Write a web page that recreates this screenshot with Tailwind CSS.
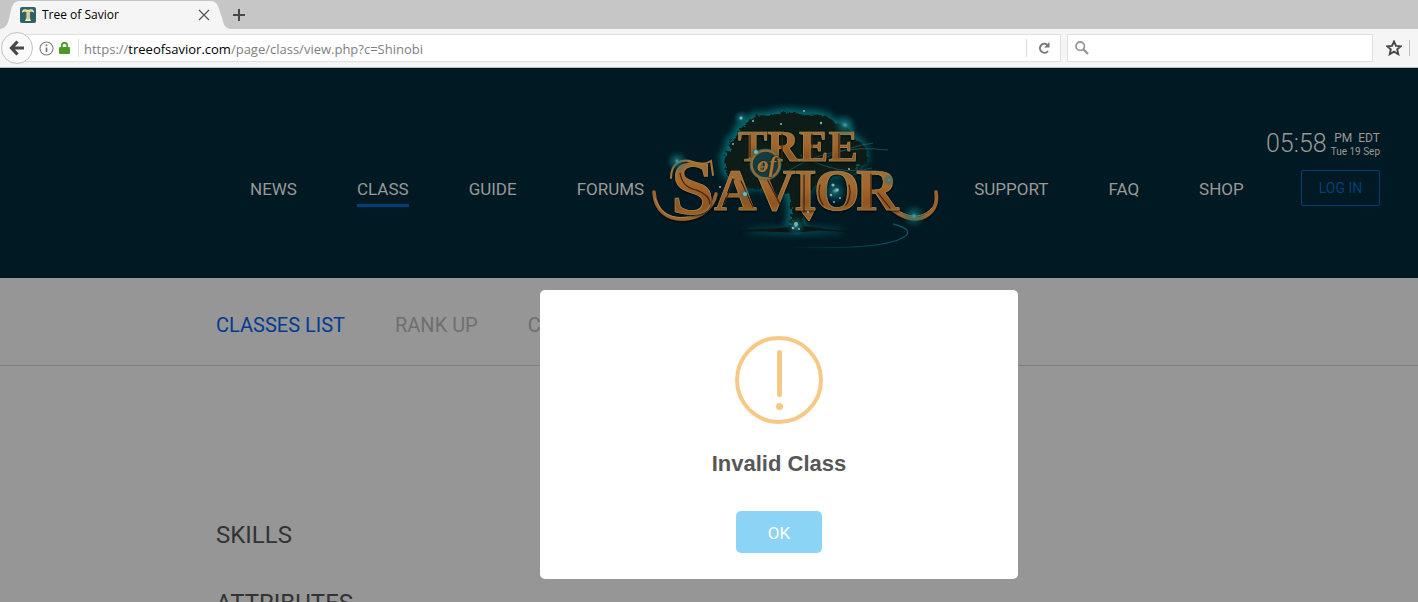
<!DOCTYPE html>
<html lang="en">
<head>
<meta charset="utf-8">
<meta name="viewport" content="width=device-width, initial-scale=1">
<title>Tree of Savior</title>
<script src="https://cdn.jsdelivr.net/npm/@tailwindcss/browser@4"></script>
</head>
<body class="flex h-screen flex-col overflow-hidden bg-[#969696] font-['Roboto',sans-serif]">

<!-- Browser chrome -->
<div class="shrink-0 border-b border-[#b9bdbb] bg-[#f5f5f5] font-['Open_Sans','Noto_Sans',sans-serif]">
  <div class="flex h-[29px] items-stretch bg-[#c6c6c6]">
    <div class="relative flex w-[231px] items-center pr-[19px] pl-5">
      <svg class="absolute inset-0 h-full w-full" viewBox="0 0 232 29" preserveAspectRatio="none" aria-hidden="true"><path d="M0 29C7 28 8 23 10 15C12 6 13 1 20 1H211C219 1 219 7 222 15C225 23 224 28 232 29Z" fill="#f5f5f5"/></svg>
      <svg class="relative h-4 w-4" viewBox="0 0 16 16" aria-hidden="true"><rect width="16" height="16" rx="2" fill="#2f6267"/><path d="M2 5.500C2 2 5 1.800 8 3C11 1.800 14 2 14 5.500C12.500 4.500 11 4.500 9.700 5V11L11 14H5L6.500 11V5C5 4.500 3.500 4.500 2 5.500Z" fill="#fbf3c4"/><path d="M8 4V13M3.500 4H6.500M9.500 4H12.500" stroke="#c6a646" fill="none"/></svg>
      <span class="relative ml-1.5 text-xs leading-4 text-black">Tree of Savior</span>
      <button class="relative ml-auto flex h-4 w-4 items-center justify-center" aria-label="Close tab"><svg class="h-3 w-3" viewBox="0 0 12 12"><path d="M1 1L11 11M11 1L1 11" stroke="#555" stroke-width="1.200"/></svg></button>
    </div>
    <button class="flex w-4 items-center justify-center" aria-label="New tab"><svg class="h-3 w-3" viewBox="0 0 12 12"><path d="M6 0V12M0 6H12" stroke="#484848" stroke-width="2"/></svg></button>
  </div>
  <div class="flex h-[38px] items-center pl-px">
    <button class="z-10 flex h-8 w-8 shrink-0 items-center justify-center rounded-full border border-[#c3c3c3] bg-[#fafafa]" aria-label="Back"><svg class="h-4 w-4" viewBox="0 0 16 16"><path d="M8.500 1.500L2.500 8L8.500 14.500M3 8H15" fill="none" stroke="#484848" stroke-width="3.200"/></svg></button>
    <div class="-ml-4 flex h-7 flex-1 items-center border border-[#e0e0e0] bg-white pl-[21px]">
      <svg class="h-[15px] w-[15px] shrink-0" viewBox="0 0 15 15" aria-hidden="true"><circle cx="7.500" cy="7.500" r="6.500" fill="none" stroke="#7b7b7b" stroke-width="1.100"/><path d="M7.500 6.500V11" stroke="#777" stroke-width="1.700"/><circle cx="7.500" cy="4.300" r="1" fill="#777"/></svg>
      <svg class="ml-[5px] h-3 w-[11px] shrink-0" viewBox="0 0 11 12" aria-hidden="true"><path d="M2.800 6V3.500a2.700 2.700 0 0 1 5.400 0V6" fill="none" stroke="#4b9a23" stroke-width="1.700"/><rect y="5" width="11" height="7" rx="1" fill="#4b9a23"/></svg>
      <span class="ml-2 h-[18px] w-px bg-[#dedede]"></span>
      <a href="#" class="ml-[5px] flex-1 pt-px text-[13px] leading-5 whitespace-nowrap text-[#808080]">https://<span class="text-black">treeofsavior.com</span>/page/class/view.php?c=Shinobi</a>
      <span class="h-[18px] w-px bg-[#dedede]"></span>
      <button class="flex w-[33px] items-center justify-center" aria-label="Reload"><svg class="h-3 w-3" viewBox="0 0 12 12"><path d="M10 9A4.500 4.500 0 1 1 9 2.500" fill="none" stroke="#777" stroke-width="2"/><path d="M11.500 0V5.500H6Z" fill="#777"/></svg></button>
    </div>
    <label class="ml-1.5 flex h-7 w-[306px] items-center border border-[#e0e0e0] bg-white pl-[7px]">
      <svg class="h-3.5 w-3.5" viewBox="0 0 14 14" aria-hidden="true"><circle cx="5.200" cy="5.200" r="4.200" fill="none" stroke="#989898" stroke-width="1.800"/><path d="M8.200 8.200L13 13" stroke="#989898" stroke-width="2.400"/></svg>
      <input type="search" aria-label="Search" class="min-w-0 flex-1 px-2 text-[13px] outline-none">
    </label>
    <button class="ml-[13px] h-4 w-4" aria-label="Bookmark this page"><svg viewBox="0 0 16 16"><path d="M8 1.500L10 5.900L14.800 6.300L11.200 9.400L12.300 14.200L8 11.700L3.700 14.200L4.800 9.400L1.200 6.300L6 5.900Z" fill="none" stroke="#484848" stroke-width="1.900"/></svg></button>
    <span class="mr-2 ml-[7px] h-4 w-px bg-[#bdbdbd]"></span>
  </div>
</div>

<!-- Site header -->
<header class="flex h-[210px] shrink-0 items-center bg-[#001922] pr-[38px] pl-[250px] text-[17px] leading-6 text-[#999]">
  <nav class="mt-8 flex gap-[60px]" aria-label="Main">
    <a href="#">NEWS</a>
    <a href="#" class="-mb-1.5 border-b-3 border-[#00407a] pb-0.5" aria-current="page">CLASS</a>
    <a href="#">GUIDE</a>
    <a href="#">FORUMS</a>
  </nav>
  <a href="#" class="ml-1 w-[296px] shrink-0" aria-label="Tree of Savior home">
    <svg viewBox="648 90 296 165" class="h-[165px] w-full">
      <defs>
        <linearGradient id="gold" x1="0" y1="0" x2="0" y2="1"><stop offset="0" stop-color="#9a7440"/><stop offset=".45" stop-color="#a4662b"/><stop offset=".7" stop-color="#8e541f"/><stop offset="1" stop-color="#a8793c"/></linearGradient>
        <radialGradient id="spark"><stop offset="0" stop-color="#5fa5a9"/><stop offset=".25" stop-color="#1e7c82" stop-opacity=".6"/><stop offset="1" stop-color="#006570" stop-opacity="0"/></radialGradient>
        <linearGradient id="trail" x1="0" x2="1"><stop offset="0" stop-color="#056070" stop-opacity="0"/><stop offset="1" stop-color="#075766"/></linearGradient>
        <filter id="glow" x="-20%" y="-60%" width="140%" height="220%"><feGaussianBlur stdDeviation="3.500"/></filter>
        <filter id="rough"><feTurbulence baseFrequency=".15" numOctaves="2" seed="4" result="n"/><feDisplacementMap in="SourceGraphic" in2="n" scale="6"/></filter>
        <filter id="shade" x="-10%" y="-10%" width="120%" height="120%"><feDropShadow dx="0" dy="1" stdDeviation="1.300" flood-color="#000a0d"/></filter>
      </defs>
      <path d="M746 120Q752 112 766 114Q786 107 803 112Q825 109 834 121Q850 123 852 136Q866 141 864 151Q870 159 857 165Q850 176 836 173L812 184L803 197Q798 212 804 226H788Q793 209 787 190Q770 195 763 185Q741 189 735 177Q721 175 724 162Q719 151 731 148Q722 140 736 134Q734 126 746 120Z" fill="#006a70" stroke="#006a70" stroke-width="5" filter="url(#glow)"/>
      <ellipse cx="795" cy="230" rx="50" ry="4" fill="#004550" filter="url(#glow)"/>
      <path d="M747 120Q753 110 766 113Q786 107 803 112Q825 109 834 121Q850 123 852 136Q866 141 864 151Q870 159 857 165Q850 176 836 173L812 184L803 197Q798 212 804 228H788Q793 209 787 190Q770 195 763 185Q741 189 735 177Q721 175 724 162Q719 151 731 148Q722 140 736 134Q734 126 747 120Z" fill="#111a18" filter="url(#rough)"/>
      <path d="M741 230Q760 228 776 228L792 226H807L838 230L852 231L820 229L794 231L765 230Z" fill="#0c1514" stroke="#0c1514"/>
      <path d="M790 246Q870 249 898 239Q920 230 893 223" fill="none" stroke="url(#trail)" stroke-width="1.300"/>
      <path d="M785 172Q830 142 888 149M800 154Q840 176 872 167M820 159Q850 145 873 142" fill="none" stroke="#25757d" stroke-width="1" opacity=".55"/>
      <!-- Flourishes of the first and last letters -->
      <g fill="none" stroke-linecap="round" filter="url(#shade)">
        <path d="M654 191C655 210 668 219 684 218C701 217 713 207 716 193" stroke="#9a652d" stroke-width="3.500"/>
        <path d="M655 197C661 216 677 219 691 215" stroke="#b18a4f"/>
        <path d="M876 190C890 212 908 220 921 217C934 213 938 202 936 191" stroke="#9a652d" stroke-width="3.500"/>
        <path d="M881 193C896 214 918 223 932 207" stroke="#b18a4f"/>
        <path d="M800 208L809 220L815 208" fill="#9a6229" stroke="#a87d42"/>
      </g>
      <g font-family="Liberation Serif" font-weight="bold" fill="url(#gold)" stroke="#a88752" stroke-width=".7" filter="url(#shade)">
        <text x="738" y="160" font-size="44">TREE</text>
        <text x="671" y="213" font-size="78">S</text>
        <text x="714" y="209" font-size="59">A</text>
        <text x="753" y="209" font-size="59">V</text>
        <text x="794" y="209" font-size="59">I</text>
        <text x="814" y="209" font-size="59">O</text>
        <text x="856" y="209" font-size="59">R</text>
      </g>
      <g fill="none" stroke-linecap="round">
        <path d="M680 172Q682 186 696 189Q710 194 710 203M734 178L724 204M741 180L753 206M766 176L781 205M804 174V211M820 184Q817 195 823 204M849 184Q852 195 846 204M871 173V206M878 192L890 207M750 134V156M782 133V157M812 133V157M839 133V157" stroke="#40200e" stroke-width="1.200"/>
        <path d="M671 177C671 162 681 157 693 161C701 164 706 163 711 160L713 174" stroke="#a87737" stroke-width="2"/>
      </g>
      <circle cx="765.500" cy="163.500" r="14" fill="#143b3e" stroke="#9b682d" stroke-width="2.500"/>
      <circle cx="765.500" cy="163.500" r="15.500" fill="none" stroke="#35767a" stroke-width=".8"/>
      <text x="757" y="171" font-family="Liberation Serif" font-style="italic" font-weight="bold" font-size="23" fill="#a77637" stroke="#101d1b" stroke-width="1" paint-order="stroke">of</text>
      <path d="M758 166H766M762 161V171" stroke="#a77637" stroke-width="1"/>
      <g fill="url(#spark)">
        <circle cx="741" cy="117" r="8"/><circle cx="677" cy="160" r="11"/><circle cx="845" cy="124" r="12"/><circle cx="914" cy="215" r="12"/><circle cx="835" cy="190" r="12"/><circle cx="796" cy="225" r="10"/><circle cx="745" cy="193" r="6"/><circle cx="756" cy="151" r="5"/><circle cx="889" cy="179" r="6"/>
      </g>
      <g fill="#78b9bd">
        <circle cx="741" cy="117" r="1.500"/><circle cx="745" cy="193" r="2"/><circle cx="756" cy="151" r="2"/><circle cx="781" cy="123" r="1"/><circle cx="821" cy="122" r="1.200"/><circle cx="804" cy="110" r="1"/><circle cx="753" cy="120" r="1"/><circle cx="733" cy="143" r="1"/><circle cx="720" cy="186" r="1"/><circle cx="833" cy="184" r="1.600"/><circle cx="837" cy="189" r="1.800"/><circle cx="831" cy="194" r="1.300"/><circle cx="840" cy="197" r="1"/><circle cx="834" cy="201" r="1"/><circle cx="796" cy="223" r="2"/><circle cx="793" cy="227" r="1.300"/><circle cx="799" cy="228" r="1"/><circle cx="808" cy="211" r="1"/><circle cx="849" cy="168" r="1"/>
      </g>
    </svg>
  </a>
  <nav class="mt-8 ml-[30px] flex gap-[60px]" aria-label="Help and shop">
    <a href="#">SUPPORT</a>
    <a href="#">FAQ</a>
    <a href="#">SHOP</a>
  </nav>
  <div class="mb-3 ml-auto flex flex-col items-end gap-2.5">
    <div class="flex items-center gap-1">
      <span class="text-[25px] leading-8 font-light">05:58</span>
      <span class="text-right whitespace-nowrap"><span class="block text-xs leading-4">PM&nbsp; EDT</span><span class="block text-[10px] leading-3">Tue 19 Sep</span></span>
    </div>
    <button class="h-9 w-[79px] rounded-xs border border-[#00407a] text-sm text-[#00407a]">LOG IN</button>
  </div>
</header>

<!-- Page content -->
<div class="relative flex-1 text-[#333]">
  <nav class="flex h-[88px] items-center gap-[50px] border-b border-[#7d7d7d] pt-1.5 pl-[216px] text-xl text-[#6f6f6f]" aria-label="Classes">
    <a href="#" class="text-[#003c92]">CLASSES LIST</a>
    <a href="#">RANK UP</a>
    <a href="#">CLASS TREE</a>
  </nav>
  <main class="pt-[151px] pl-[216px] text-2xl leading-9">
    <h2>SKILLS</h2>
    <h2 class="mt-8">ATTRIBUTES</h2>
  </main>

  <!-- Alert -->
  <div class="absolute inset-x-0 top-3 flex justify-center pl-[140px]">
    <div role="alertdialog" aria-labelledby="alert-title" class="flex w-[478px] flex-col items-center rounded-[5px] bg-white pt-[46px] pb-[26px] font-['Liberation_Sans',sans-serif]">
      <svg class="h-[88px] w-[88px]" viewBox="0 0 88 88" aria-hidden="true"><circle cx="44" cy="44" r="42" fill="none" stroke="#f8c986" stroke-width="4"/><rect x="42" y="14" width="5" height="47" rx="2.500" fill="#f8c986"/><circle cx="44.500" cy="70.500" r="3.500" fill="#f8c986"/></svg>
      <h1 id="alert-title" class="mt-6 text-[22px] leading-8 font-bold text-[#575757]">Invalid Class</h1>
      <button class="mt-[31px] h-[42px] w-[86px] rounded-[5px] bg-[#8cd4f5] pt-1 font-['Roboto',sans-serif] text-[17px] text-white">OK</button>
    </div>
  </div>
</div>
</body>
</html>
